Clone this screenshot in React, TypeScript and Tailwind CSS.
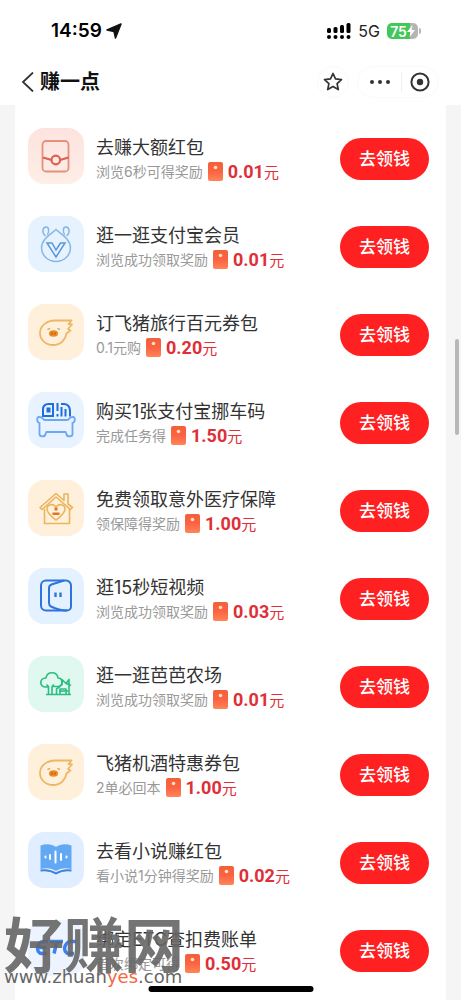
import React from 'react';

type IconName = 'packet' | 'member' | 'pig' | 'car' | 'house' | 'video' | 'farm' | 'book' | 'etc';

interface Task {
  title: string;
  desc: string;
  amount: string;
  icon: IconName;
}

const TASKS: Task[] = [
  { title: '去赚大额红包', desc: '浏览6秒可得奖励', amount: '0.01', icon: 'packet' },
  { title: '逛一逛支付宝会员', desc: '浏览成功领取奖励', amount: '0.01', icon: 'member' },
  { title: '订飞猪旅行百元券包', desc: '0.1元购', amount: '0.20', icon: 'pig' },
  { title: '购买1张支付宝挪车码', desc: '完成任务得', amount: '1.50', icon: 'car' },
  { title: '免费领取意外医疗保障', desc: '领保障得奖励', amount: '1.00', icon: 'house' },
  { title: '逛15秒短视频', desc: '浏览成功领取奖励', amount: '0.03', icon: 'video' },
  { title: '逛一逛芭芭农场', desc: '浏览成功领取奖励', amount: '0.01', icon: 'farm' },
  { title: '飞猪机酒特惠券包', desc: '2单必回本', amount: '1.00', icon: 'pig' },
  { title: '去看小说赚红包', desc: '看小说1分钟得奖励', amount: '0.02', icon: 'book' },
  { title: '绑定ETC查扣费账单', desc: '首次绑定可得', amount: '0.50', icon: 'etc' },
];

const ICON_BG: Record<IconName, string> = {
  packet: 'bg-linear-to-b from-[#fde3df] to-[#fdeee6]',
  member: 'bg-[#e6f2fe]',
  pig: 'bg-[#fef0db]',
  car: 'bg-[#e9f3ff]',
  house: 'bg-[#fef0db]',
  video: 'bg-[#e4f1ff]',
  farm: 'bg-[#e0f8ef]',
  book: 'bg-[#e0eeff]',
  etc: 'bg-[#edf4ff]',
};

// 任务图标，统一使用 56x56 画布
const ICON_ART: Record<IconName, React.ReactNode> = {
  packet: (
    <g stroke="#d9614f" strokeWidth="1.8">
      <rect x="14.5" y="13" width="26" height="30.5" rx="3.5" stroke="#e58f7f" />
      <path d="M15 29.5 23.5 32M32 32l8.5-2.5" strokeWidth="2.2" />
      <circle cx="27.8" cy="32" r="4.3" strokeWidth="2.2" />
    </g>
  ),
  member: (
    <g stroke="#86b4e3" strokeWidth="1.4">
      <path d="M28 13.500c-4 4-14.500 9-14.500 18.500a14.500 13.500 0 0 0 29 0c0-9.500-10.500-14.500-14.500-18.500Z" />
      <path d="M17.500 20c-4-3-3-9 .5-9s3 4.500 1.500 8M38.500 20c4-3 3-9-.5-9s-3 4.500-1.500 8" />
      <path d="M19 27h5l4 7 4.500-7H37l-9 14Z" stroke="#5b98d8" strokeWidth="1.5" />
    </g>
  ),
  pig: (
    <g stroke="#eeb765" strokeWidth="1.8">
      <path d="M43.500 16.500H27c-8.500 0-15 5.500-15 12.500s6 12 13 12c8.500 0 12.500-6 13.500-11.500l4-3-2.500-1.500 4-4.500-3.500-.5Z" strokeLinejoin="round" />
      <path d="M19.500 25.500l2.500-1M29.500 24.500l2.500 1" stroke="#c8924c" strokeWidth="1.3" />
      <ellipse cx="25.5" cy="29.5" rx="4.5" ry="3.2" fill="#ee8a22" stroke="none" />
      <path d="M24 28.500v2M27 28.500v2" stroke="#a95812" strokeWidth="1.2" />
    </g>
  ),
  car: (
    <g stroke="#1d6fe0" strokeWidth="2">
      <path d="M15 24v-6.500c0-3.500 2-5.500 5.500-5.500H25v12H15Z" />
      <path d="M19.500 16.500h2v3h-2zM29.500 11v8M29.500 22v2.500M33.500 24.500V15M33 12h3.500c3.500 0 5.500 3.500 5.500 7v5.500M37.500 17v7.500" />
      <path d="M11 25c5 0 3 3 6 3h22c3 0 1-3 6-3 2.500 0 2.500 5-.5 6v11c0 3-5.500 3.500-6 0l-1-2h-19l-1 2c-.5 3.500-6 3-6 0V31c-3-1-3-6-.5-6Z" stroke="#6aa7f5" strokeWidth="1.8" />
    </g>
  ),
  house: (
    <g stroke="#ebb45d" strokeWidth="1.6" strokeLinejoin="round">
      <path d="M16.500 29v14.500h25V29M12 27.500l16-14 8 7v-6.500h4v10l4.500 3.500-2 2L28 17 14 29.500Z" />
      <path d="M28 40c-4-3-9-6.500-9-11 0-4.500 6-6 9-2 3-4 9-2.500 9 2 0 4.500-5 8-9 11Z" />
      <path d="M26.500 27.500h3v3h-3zM24.500 32.500h7v2.500h-7z" fill="#df7527" stroke="none" />
    </g>
  ),
  video: (
    <g stroke="#2f74dc" strokeWidth="2" strokeLinejoin="round">
      <path d="M23 42.500h-5a5 5 0 0 1-5-5v-20a5 5 0 0 1 5-5h20a5 5 0 0 1 5 5v21a4 4 0 0 1-4 4h-16" />
      <path d="M36 12.500 23.500 16.500C22 17 21 18 21 20v15c0 1.500.5 2.700 2 3.500 4 2 9 4 16 4" />
      <path d="M27.500 24.500v4.500M32.500 24.500v4.500" strokeWidth="2.4" />
    </g>
  ),
  farm: (
    <g stroke="#2cbd83" strokeWidth="1.6" strokeLinejoin="round">
      <path d="M20 31h-2c-7 0-7-9 0-9 1-7 11-7 12 0 5 0 5 7 1 8.500H24M20.500 38.500v-8l-2-2M24 38.500v-8l2-2M18 38.500h25" />
      <path d="M28.500 38v-5l4-3M32 38v-5h6v5M34 29.500v-6l4 4 3-4V38M38 27.500l5 2" />
      <path d="M31 35h9" />
    </g>
  ),
  book: (
    <g>
      <path d="M12.500 13.500c6-2 11-1.500 15.500 1.500 4.500-3 9.500-3.500 15.500-1.500v23.500c-6-1.500-11-1-15.500 2-4.500-3-9.500-3.500-15.500-2Z" fill="#62a8f5" />
      <path d="M12.500 38.500c6-1 10-.5 15.500 3 5.500-3.500 9.500-4 15.500-3" stroke="#3b84dc" strokeWidth="2" />
      <path d="M17.500 24.500v1M22 23v4M27.500 19.500v11M33 22v6M38.500 24.500v1" stroke="#fff" strokeWidth="2" strokeLinecap="round" />
    </g>
  ),
  etc: (
    <g stroke="#3b82f0" strokeWidth="3.5">
      <path d="M20 21.500h-5c-6 0-8 12-1 12h5M9.500 27.500h9M22 21.500h13M29 21.500l-3 12M48 21.500h-5c-7 0-9 12-2 12h5" />
    </g>
  ),
};

const TaskIcon: React.FC<{ name: IconName }> = ({ name }) => (
  <div className={`size-14 shrink-0 rounded-2xl ${ICON_BG[name]}`}>
    <svg viewBox="0 0 56 56" className="size-14" fill="none" aria-hidden="true">
      {ICON_ART[name]}
    </svg>
  </div>
);

const RedPacket: React.FC = () => (
  <svg viewBox="0 0 15 19" className="h-[19px] w-[15px] shrink-0" aria-hidden="true">
    <defs>
      <linearGradient id="packet-fill" x1="0" y1="0" x2="0" y2="1">
        <stop offset="0" stopColor="#f2603c" />
        <stop offset="0.5" stopColor="#fb6342" />
        <stop offset="1" stopColor="#ff8558" />
      </linearGradient>
    </defs>
    <rect width="15" height="19" rx="2" fill="url(#packet-fill)" />
    <circle cx="7.5" cy="5.5" r="1.8" fill="#ffe3b8" />
  </svg>
);

const TaskRow: React.FC<{ task: Task }> = ({ task }) => (
  <li className="flex h-22 items-center gap-3 pr-[17px] pl-[13px]">
    <div className="pb-1.5">
      <TaskIcon name={task.icon} />
    </div>
    <div className="min-w-0 flex-1 pb-0.5 whitespace-nowrap">
      <h2 className="text-[18px] leading-[26px] text-[#333]">{task.title}</h2>
      <div className="flex h-5 items-center gap-[5px]">
        <span className="text-[14px] text-[#999]">{task.desc}</span>
        <RedPacket />
        <span className="font-[Roboto,'Noto_Sans_CJK_SC',sans-serif] text-[18px] font-bold text-[#df2f38]">
          {task.amount}
          <span className="text-[15px] font-normal">元</span>
        </span>
      </div>
    </div>
    <button
      type="button"
      className="h-[42px] w-[89px] shrink-0 rounded-full bg-[#ff2121] pt-0.5 text-[17px] font-medium text-white"
    >
      去领钱
    </button>
  </li>
);

const StatusBar: React.FC = () => (
  <div className="flex h-[62px] items-center justify-between pr-10 pl-[51px]">
    <div className="flex items-center gap-1 text-[19px] font-semibold text-black">
      <span>14:59</span>
      <svg viewBox="0 0 16 16" className="size-4" aria-hidden="true">
        <path d="M15 1 1 7l7 1.500L9.500 15Z" fill="#111" stroke="#111" strokeWidth="1.5" strokeLinejoin="round" />
      </svg>
    </div>
    <div className="flex items-center gap-[7px]">
      <svg viewBox="0 0 24 16" className="h-4 w-6" fill="#000" aria-hidden="true">
        <rect x="0" y="5" width="4" height="5" rx="1.5" />
        <rect x="6.5" y="4" width="4" height="6" rx="1.5" />
        <rect x="13" y="2" width="4" height="8" rx="1.5" />
        <rect x="19.5" y="0" width="4" height="10" rx="1.5" />
        <circle cx="2" cy="14" r="2" />
        <circle cx="8.5" cy="14" r="2" />
        <circle cx="15" cy="14" r="2" />
        <circle cx="21.5" cy="14" r="2" />
      </svg>
      <span className="text-[16px] text-[#222]">5G</span>
      <div className="flex items-center gap-px">
        <div className="flex h-4 w-[31px] items-center justify-center rounded-[5px] bg-linear-to-r from-[#43c759] from-75% to-[#b5b5b5] to-75% text-[14px] font-semibold text-white">
          75
          <svg viewBox="0 0 8 12" className="h-3 w-2" fill="#fff" aria-hidden="true">
            <path d="M5.500 0 0 7h3.500l-1 5L8 5H4.500Z" />
          </svg>
        </div>
        <div className="h-1.5 w-0.5 rounded-r bg-[#b5b5b5]" />
      </div>
    </div>
  </div>
);

const NavBar: React.FC = () => (
  <div className="flex h-[43px] items-start justify-between pr-[22px] pl-[21px]">
    <div className="flex h-10 items-center gap-1.5">
      <button type="button" aria-label="返回">
        <svg viewBox="0 0 13 20" className="h-5 w-[13px]" fill="none" stroke="#333" strokeWidth="1.8" aria-hidden="true">
          <path d="M12 .5 2 10l10 9.500" />
        </svg>
      </button>
      <h1 className="text-[20px] font-bold text-[#111]">赚一点</h1>
    </div>
    <div className="flex h-10 items-center gap-2">
      <button type="button" aria-label="收藏" className="flex size-8 items-center justify-center rounded-full border border-[#fafafa]">
        <svg viewBox="0 0 20 20" className="size-5" fill="none" stroke="#333" strokeWidth="1.7" strokeLinejoin="round" aria-hidden="true">
          <path d="m10 1.500 2.500 5.400 6 .7-4.400 4 1.200 6-5.300-3-5.300 3 1.200-6-4.400-4 6-.7Z" />
        </svg>
      </button>
      <div className="flex h-8 items-center rounded-full border border-[#fafafa]">
        <button type="button" aria-label="更多" className="flex h-5 w-11 items-center justify-center border-r border-[#f0f0f0]">
          <svg viewBox="0 0 20 4" className="h-1 w-5" fill="#333" aria-hidden="true">
            <circle cx="2" cy="2" r="2" />
            <circle cx="10" cy="2" r="2" />
            <circle cx="18" cy="2" r="2" />
          </svg>
        </button>
        <button type="button" aria-label="关闭" className="flex w-9 items-center justify-center">
          <svg viewBox="0 0 20 20" className="size-5" fill="none" aria-hidden="true">
            <circle cx="10" cy="10" r="8.6" stroke="#333" strokeWidth="2" />
            <circle cx="10" cy="10" r="3.2" fill="#333" />
          </svg>
        </button>
      </div>
    </div>
  </div>
);

const Watermark: React.FC = () => (
  <div className="pointer-events-none absolute bottom-3.5 left-1 whitespace-nowrap text-[#666]">
    <p className="text-[60px] leading-[44px] font-bold opacity-90">好赚网</p>
    <p className="font-['DejaVu_Sans',sans-serif] text-[18px] leading-[18px] [text-shadow:0_0_2px_#fff,0_0_2px_#fff]">
      www.zhuan<span className="text-[#f4683f]">yes</span>.com
    </p>
  </div>
);

export default function App() {
  return (
    <div className="relative min-h-screen overflow-hidden bg-[#f5f5f5] font-[Inter,'Noto_Sans_CJK_SC',sans-serif]">
      <header className="bg-white">
        <StatusBar />
        <NavBar />
      </header>
      <main className="mx-[15px] bg-white pt-2.5 pb-[5px]">
        <ul>
          {TASKS.map((task) => (
            <TaskRow key={task.title} task={task} />
          ))}
        </ul>
      </main>
      <div className="absolute top-[339px] right-0.5 h-24 w-1 rounded-full bg-[#b8b8b8]" />
      <Watermark />
      <div className="absolute bottom-2 left-1/2 h-1.5 w-[165px] -translate-x-1/2 rounded-full bg-black" />
    </div>
  );
}
